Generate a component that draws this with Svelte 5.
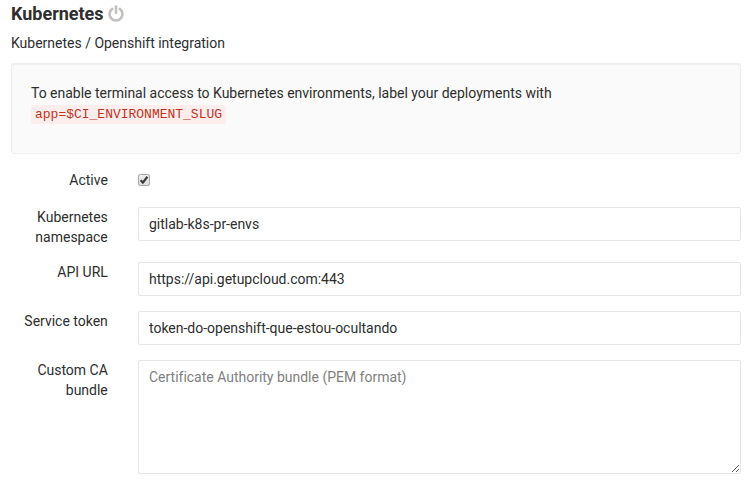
<script>
  const fields = [
    { id: 'namespace', label: 'Kubernetes namespace', value: 'gitlab-k8s-pr-envs' },
    { id: 'api-url', label: 'API URL', value: 'https://api.getupcloud.com:443' },
    { id: 'token', label: 'Service token', value: 'token-do-openshift-que-estou-ocultando' }
  ];
</script>

<main>
  <h4>
    Kubernetes
    <svg class="power" viewBox="0 0 16 17" aria-hidden="true">
      <path d="M4.2 3.9a6.4 6.4 0 1 0 7.6 0" />
      <path d="M8 1.6v6.2" />
    </svg>
  </h4>
  <p class="intro">Kubernetes / Openshift integration</p>
  <div class="well">
    To enable terminal access to Kubernetes environments, label your deployments with<br />
    <code>app=$CI_ENVIRONMENT_SLUG</code>
  </div>

  <form>
    <div class="row active">
      <label for="active">Active</label>
      <span class="check">
        <input id="active" type="checkbox" checked />
        <svg viewBox="0 0 12 12" aria-hidden="true"><path d="M2.6 6.2l2.3 2.4L9.4 2.8" /></svg>
      </span>
    </div>
    {#each fields as field}
      <div class="row">
        <label for={field.id}>{field.label}</label>
        <input class="control" id={field.id} type="text" value={field.value} />
      </div>
    {/each}
    <div class="row">
      <label for="bundle">Custom CA bundle</label>
      <textarea class="control" id="bundle" placeholder="Certificate Authority bundle (PEM format)"></textarea>
    </div>
  </form>
</main>

<style>
  :global(body) { margin: 0; background: #fff; overflow: hidden; }
  main {
    box-sizing: border-box;
    width: 750px;
    height: 481px;
    padding: 3px 9px 0 11px;
    overflow: hidden;
    font: 14px/20px Roboto, sans-serif;
    letter-spacing: -0.008px;
    color: #2e2e2e;
  }
  h4 {
    display: flex;
    align-items: flex-start;
    gap: 4px;
    height: 22px;
    margin: 0;
    font-size: 18px;
    line-height: 22px;
    font-weight: 700;
  }
  .power { width: 16px; height: 17px; margin-top: 2px; fill: none; stroke: #c2c0be; stroke-width: 2.6; stroke-linecap: round; }
  .intro { margin: 8px 0 10px; }
  .well {
    box-sizing: border-box;
    height: 91px;
    padding: 19px;
    border: 1px solid #eee;
    border-radius: 3px;
    background: #fafafa;
    box-shadow: inset 0 1px 1px rgba(0, 0, 0, 0.05);
  }
  code {
    padding: 2px 4px;
    border-radius: 3px;
    background: #fdeeed;
    color: #c0341d;
    font: 13px/20px "Liberation Mono", monospace;
  }
  form { margin-top: 16px; }
  .row {
    display: grid;
    grid-template-columns: 96.8px 603px;
    column-gap: 30.2px;
    align-items: start;
    margin-bottom: 15px;
  }
  .active { margin-bottom: 17px; }
  label { text-align: right; }
  .control {
    box-sizing: border-box;
    width: 603px;
    height: 34px;
    margin: 0;
    padding: 6px 10px;
    border: 1px solid #e5e5e5;
    border-radius: 2px;
    background: #fff;
    color: #2e2e2e;
    font: 14px/20px Roboto, sans-serif;
    letter-spacing: -0.01px;
  }
  textarea.control { height: 114px; }
  .control::placeholder { color: #7f7f7f; }
  .check { display: grid; width: 12px; height: 12px; margin-top: 4px; }
  .check > * { grid-area: 1 / 1; }
  .check input {
    appearance: none;
    box-sizing: border-box;
    width: 12px;
    height: 12px;
    margin: 0;
    border: 1px solid #a8a8a8;
    border-radius: 2px;
    background: linear-gradient(#eee, #dedede);
  }
  .check svg { width: 12px; height: 12px; fill: none; stroke: #3c3c3c; stroke-width: 2.3; pointer-events: none; }
</style>
